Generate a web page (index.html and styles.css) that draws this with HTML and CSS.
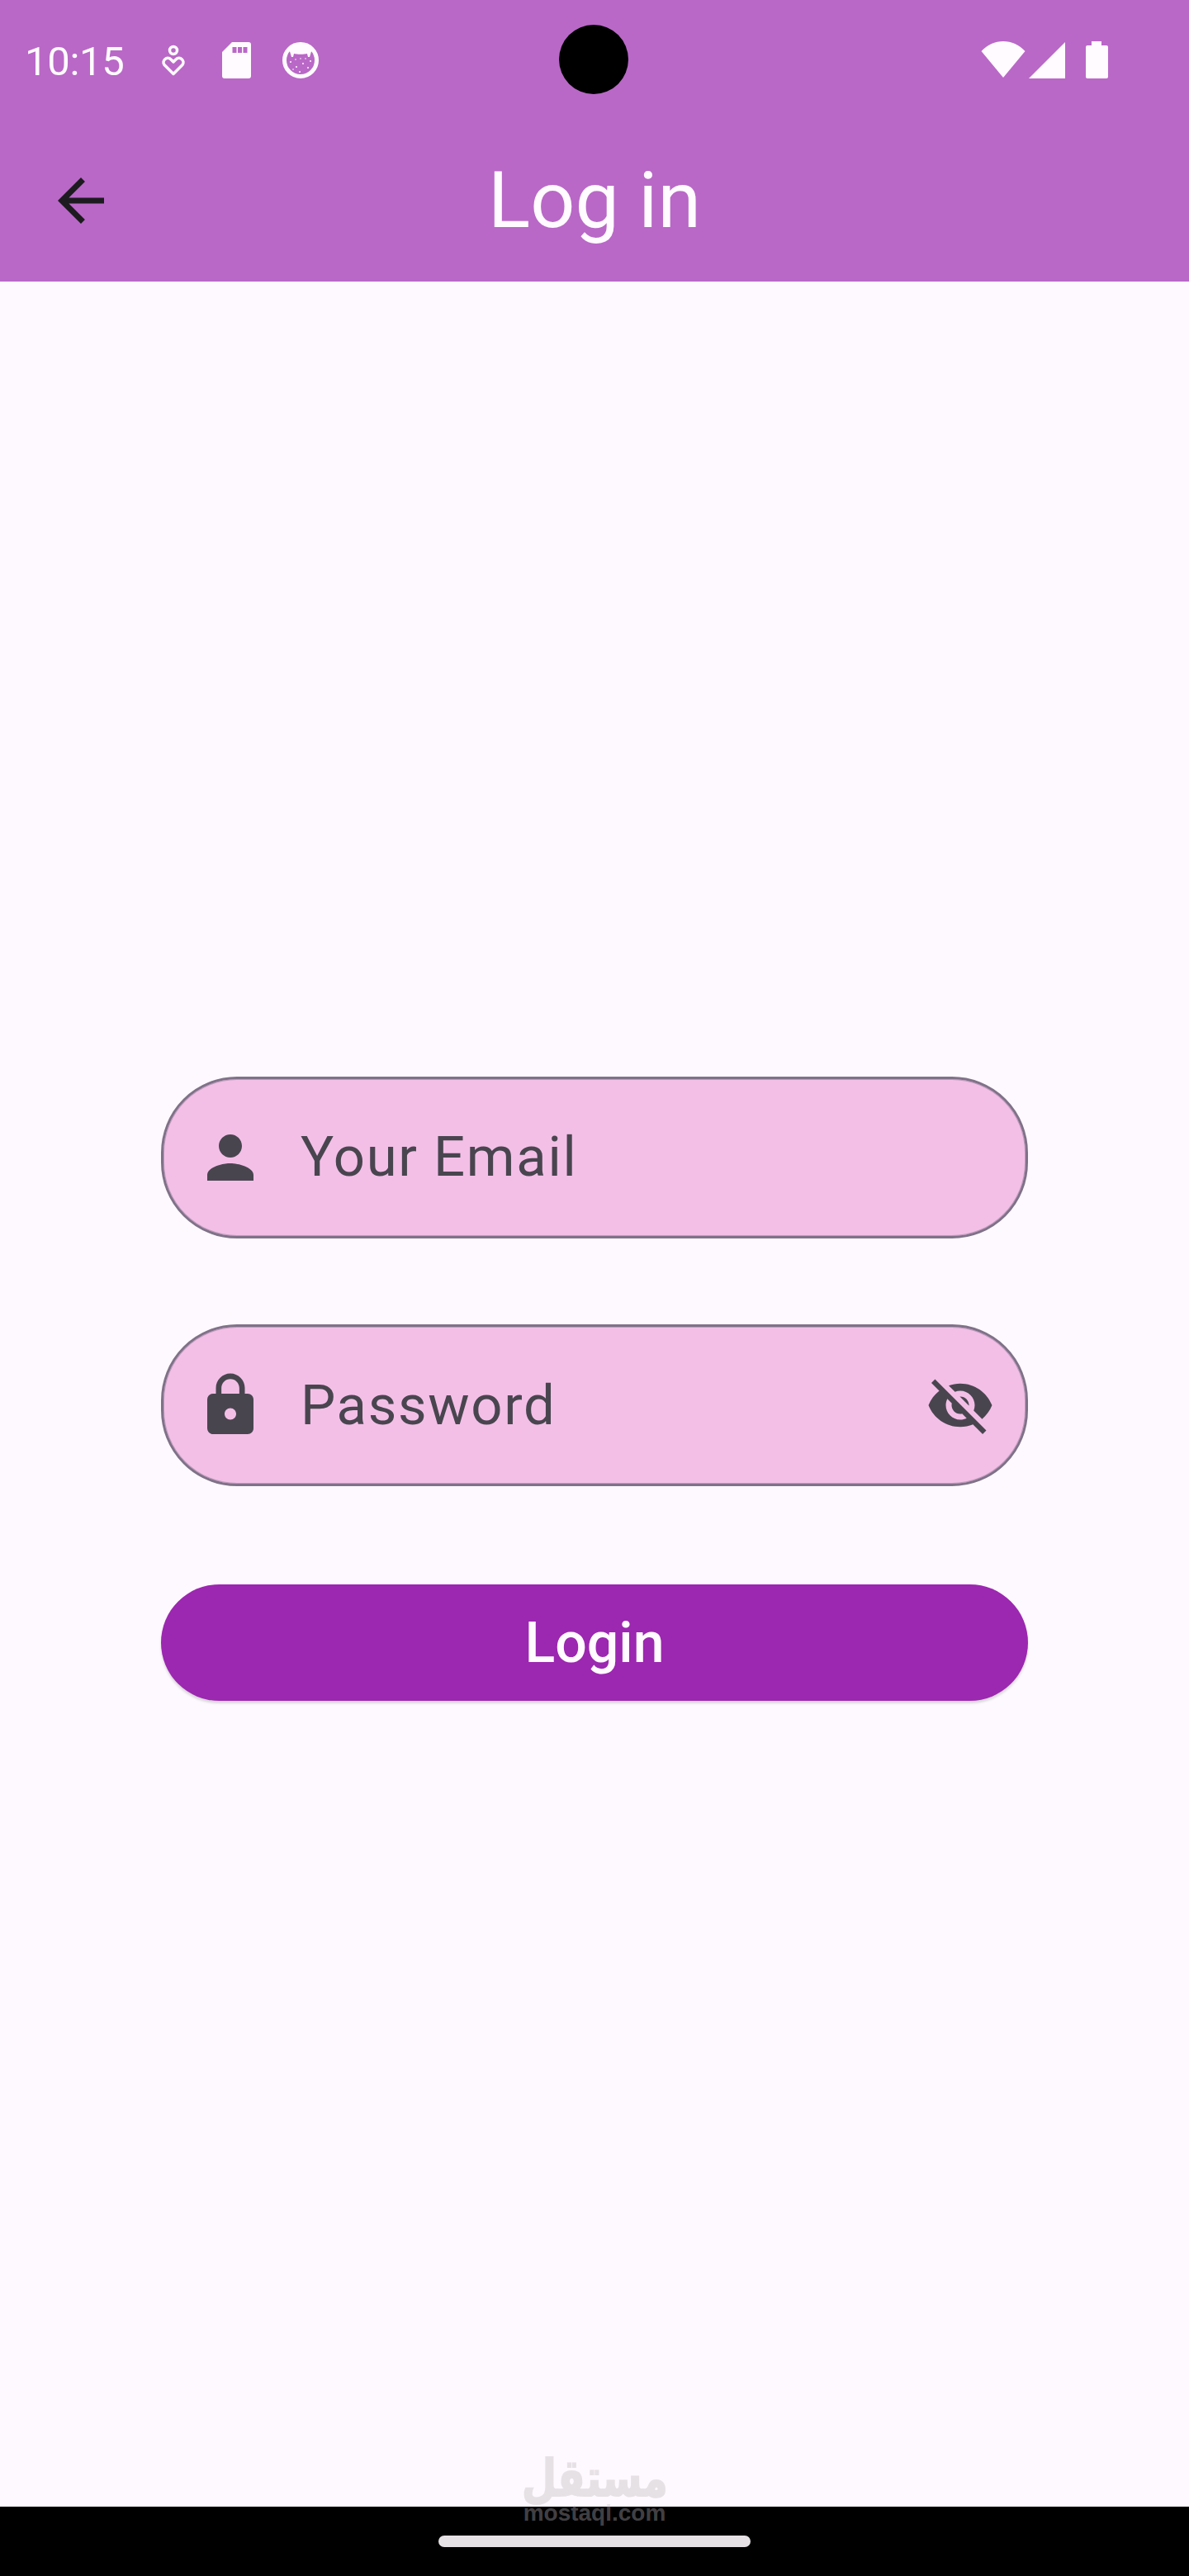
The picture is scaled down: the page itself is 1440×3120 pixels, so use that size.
FILE: index.html
```html
<!DOCTYPE html>
<html lang="en">
<head>
  <meta charset="UTF-8" />
  <meta name="viewport" content="width=device-width, initial-scale=1.0"/>
  <title>Log in</title>
  <link rel="stylesheet" href="styles.css">
</head>
<body>
  <header class="top">
    <div class="status">
      <span class="time">10:15</span>
      <svg class="ic-heart" viewBox="0 0 28 38"><circle cx="14" cy="7" r="4.500" fill="none" stroke="#fffbfe" stroke-width="3.500"/><path d="M14 35.500 3 24.500C-.5 20 6 13 11 18L14 21l3-3C22 13 28.500 20 25 24.500z" fill="none" stroke="#fffbfe" stroke-width="3.500" stroke-linejoin="round"/></svg>
      <svg class="ic-sd" viewBox="0 0 35 44"><path fill-rule="evenodd" fill="#fffbfe" d="M12 0H32a3 3 0 0 1 3 3V41a3 3 0 0 1-3 3H3a3 3 0 0 1-3-3V12zM12.500 6V13H17.500V6zM19 6V13H24V6zM25.500 6V13H30.500V6z"/></svg>
      <svg class="ic-cat" viewBox="0 0 44 44"><circle cx="22" cy="22" r="19.500" fill="none" stroke="#fffbfe" stroke-width="5"/><path d="M8 8C14 1 30 1 36 8L33 18H31L30 14C26 15 18 15 14 14L13 18H11z" fill="#fffbfe"/><g fill="#fffbfe"><circle cx="10" cy="24" r="1"/><circle cx="17" cy="30" r="1"/><circle cx="25" cy="26" r="1"/><circle cx="31" cy="31" r="1"/><circle cx="34" cy="23" r="1"/><circle cx="21" cy="36" r="1"/><circle cx="13" cy="33" r=".8"/><circle cx="22" cy="20" r=".8"/><circle cx="28" cy="20" r=".8"/><circle cx="16" cy="21" r=".8"/></g></svg>
      <span class="status-gap"></span>
      <svg class="ic-wifi" viewBox="0 0 54 44"><path d="M27 44 0.500 12C8 4 17 0 27 0S46 4 53.500 12z" fill="#fffbfe"/></svg>
      <svg class="ic-signal" viewBox="0 0 44 44"><path d="M44 0V44H0z" fill="#fffbfe"/></svg>
      <svg class="ic-batt" viewBox="0 0 27 45"><path d="M7 0H19V5H25a2 2 0 0 1 2 2V43a2 2 0 0 1-2 2H2a2 2 0 0 1-2-2V7a2 2 0 0 1 2-2H7z" fill="#fffbfe"/></svg>
      <div class="camera"></div>
    </div>
    <div class="appbar">
      <svg class="back" viewBox="0 0 24 24"><path d="M20 11H7.830l5.590-5.590L12 4l-8 8 8 8 1.410-1.410L7.830 13H20v-2z"/></svg>
      <h1>Log in</h1>
    </div>
  </header>

  <main class="form">
    <label class="field">
      <svg class="icon" viewBox="0 0 24 24"><path d="M12 12c2.210 0 4-1.790 4-4s-1.790-4-4-4-4 1.790-4 4 1.790 4 4 4zm0 2c-2.670 0-8 1.340-8 4v2h16v-2c0-2.660-5.330-4-8-4z"/></svg>
      <span class="hint hint-email">Your Email</span>
    </label>
    <label class="field field-pass">
      <svg class="icon" viewBox="0 0 24 24"><path d="M18 8h-1V6c0-2.760-2.240-5-5-5S7 3.240 7 6v2H6c-1.100 0-2 .9-2 2v10c0 1.100.9 2 2 2h12c1.100 0 2-.9 2-2V10c0-1.100-.9-2-2-2zm-6 9c-1.100 0-2-.9-2-2s.9-2 2-2 2 .9 2 2-.9 2-2 2zm3.100-9H8.900V6c0-1.710 1.390-3.100 3.100-3.100 1.710 0 3.100 1.390 3.100 3.100v2z"/></svg>
      <span class="hint hint-pass">Password</span>
      <svg class="icon eye" viewBox="0 0 24 24"><path d="M12 7c2.760 0 5 2.240 5 5 0 .65-.13 1.260-.36 1.830l2.920 2.920c1.510-1.260 2.700-2.890 3.430-4.750-1.730-4.390-6-7.500-11-7.500-1.400 0-2.740.25-3.980.7l2.160 2.160C10.740 7.130 11.350 7 12 7zM2 4.270l2.280 2.280.46.46C3.080 8.300 1.780 10.020 1 12c1.730 4.390 6 7.500 11 7.500 1.550 0 3.030-.3 4.380-.84l.42.42L19.730 22 21 20.730 3.270 3 2 4.270zM7.530 9.800l1.550 1.550c-.05.21-.08.43-.08.65 0 1.660 1.340 3 3 3 .22 0 .44-.03.65-.08l1.550 1.550c-.67.33-1.410.53-2.200.53-2.760 0-5-2.240-5-5 0-.79.2-1.530.53-2.200zm4.310-.78l3.150 3.150.02-.16c0-1.660-1.340-3-3-3l-.17.01z"/></svg>
    </label>
    <button class="login">Login</button>
  </main>

  <footer class="navbar">
    <div class="pill"></div>
    <div class="watermark">
      <span class="wm-ar" lang="ar" dir="rtl">مستقل</span>
      <span class="wm-en">mostaql.com</span>
    </div>
  </footer>
</body>
</html>
```

FILE: styles.css
```css
body {
  font-family: Roboto, Arial, sans-serif;
  background: #fef9ff;
  margin: 0;
  padding: 0;
  height: 3120px;
  display: flex;
  flex-direction: column;
  overflow: hidden;
}
.top {
  background: #b968c7;
  height: 341px;
  flex-shrink: 0;
}
.status {
  position: relative;
  height: 144px;
  padding: 50px 98px 0 30px;
  box-sizing: border-box;
  display: flex;
  align-items: flex-start;
}
.time {
  color: #fffbfe;
  font-size: 49px;
  letter-spacing: -0.3px;
  line-height: 50px;
  width: 166px;
}
.ic-heart {
  width: 28px;
  height: 38px;
  margin-top: 4px;
  margin-right: 45px;
  overflow: visible;
}
.ic-sd {
  width: 35px;
  height: 44px;
  margin-top: 1px;
  margin-right: 38px;
}
.ic-cat {
  width: 44px;
  height: 44px;
  margin-top: 1px;
}
.status-gap {
  flex: 1;
}
.ic-wifi {
  width: 54px;
  height: 44px;
  margin-right: 4px;
}
.ic-signal {
  width: 44px;
  height: 44px;
  margin-top: 1px;
  margin-right: 25px;
}
.ic-batt {
  width: 27px;
  height: 45px;
}
.camera {
  position: absolute;
  left: 677px;
  top: 30px;
  width: 84px;
  height: 84px;
  border-radius: 50%;
  background: #000;
}
.appbar {
  height: 197px;
  position: relative;
  display: flex;
  align-items: center;
  justify-content: center;
}
.back {
  position: absolute;
  left: 56px;
  top: 57px;
  width: 84px;
  height: 84px;
  fill: #1d1b20;
}
.appbar h1 {
  margin: 0;
  color: #fffbfe;
  font-size: 95px;
  font-weight: 400;
}
.form {
  flex: 1;
  width: 1050px;
  margin: 0 auto;
  padding-top: 963px;
  display: flex;
  flex-direction: column;
}
.field {
  height: 196px;
  box-sizing: border-box;
  border: 3px solid #7f7288;
  box-shadow: inset 0 0 0 1px rgba(127, 114, 136, 0.45);
  border-radius: 92px;
  background: #f3bfe7;
  display: flex;
  align-items: center;
  padding-left: 39px;
  color: #49454f;
  margin-bottom: 104px;
}
.field-pass {
  margin-bottom: 119px;
}
.icon {
  width: 84px;
  height: 84px;
  fill: #49454f;
  flex-shrink: 0;
}
.hint {
  font-size: 67px;
  letter-spacing: 1.700px;
  line-height: 78px;
  margin-top: -3px;
}
.hint-email {
  margin-left: 43px;
}
.hint-pass {
  margin-left: 43px;
  margin-top: 0;
}
.eye {
  margin-left: auto;
  margin-right: 37px;
}
.login {
  height: 141px;
  border: none;
  border-radius: 71px;
  background: #9c27b0;
  color: #fffbfe;
  font-family: inherit;
  font-size: 68px;
  font-weight: 500;
  padding: 0;
  box-shadow: 0 3px 3px rgba(0, 0, 0, 0.14);
}
.navbar {
  height: 84px;
  flex-shrink: 0;
  background: #000;
  position: relative;
  display: flex;
  justify-content: center;
  padding-top: 35px;
  box-sizing: border-box;
}
.pill {
  width: 378px;
  height: 14px;
  border-radius: 7px;
  background: #e6e1e5;
}
.watermark {
  position: absolute;
  left: 632px;
  top: -60px;
  width: 176px;
  display: flex;
  flex-direction: column;
  align-items: center;
  color: rgba(190, 186, 192, 0.37);
}
.wm-ar {
  font-family: "DejaVu Sans", sans-serif;
  font-weight: 700;
  font-size: 62px;
  line-height: 52px;
  color: #e6e1e5;
  -webkit-text-stroke: 2px #e6e1e5;
  transform: scaleX(0.78);
}
.wm-en {
  font-family: "Liberation Sans", Arial, sans-serif;
  font-weight: 700;
  font-size: 28px;
  line-height: 32px;
}
```
